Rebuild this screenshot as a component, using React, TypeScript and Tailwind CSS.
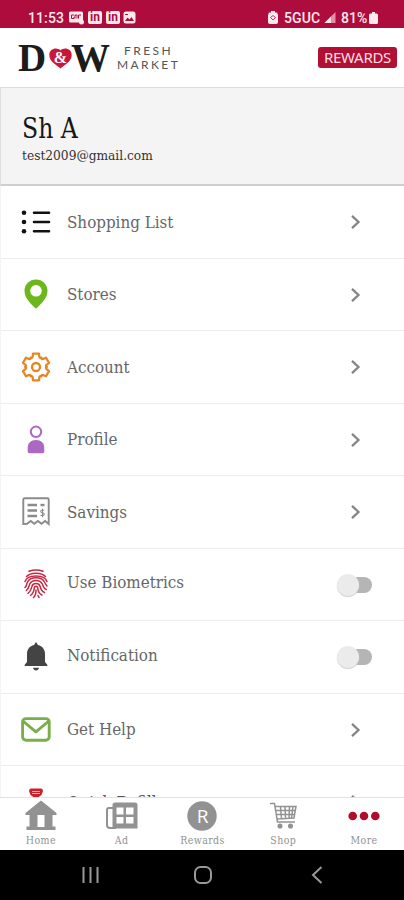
import React, { useState } from 'react';

interface MenuItem {
  label: string;
  icon: React.ReactNode;
  isToggle?: boolean;
}

const slab = "font-['DejaVu_Serif_Condensed','DejaVu_Serif',serif] [font-stretch:condensed] inline-block whitespace-nowrap";

const ListIcon = () => (
  <svg width="30" height="24" viewBox="0 0 30 24" fill="#111">
    <circle cx="3" cy="2.700" r="2.300" />
    <circle cx="3" cy="12" r="2.300" />
    <circle cx="3" cy="21.300" r="2.300" />
    <path d="M13 2.700h15M13 12h15M13 21.300h15" stroke="#111" strokeWidth="2.600" strokeLinecap="round" />
  </svg>
);

const PinIcon = () => (
  <svg width="24" height="30" viewBox="0 0 24 30">
    <path
      fillRule="evenodd"
      fill="#6cb81c"
      d="M12 0.5C5.4 0.5 0.5 5.4 0.5 11.8C0.5 19.5 7 25 12 29.8C17 25 23.5 19.5 23.5 11.8C23.5 5.4 18.6 0.5 12 0.5ZM12 6a5.8 5.8 0 1 1 0 11.6a5.8 5.8 0 0 1 0-11.6Z"
    />
  </svg>
);

const GearIcon = () => (
  <svg width="32" height="32" viewBox="-16 -16 32 32" fill="none" stroke="#e58624" strokeWidth="2.3" strokeLinecap="round" strokeLinejoin="round">
    {[0, 60, 120, 180, 240, 300].map((deg) => (
      <path key={deg} transform={`rotate(${deg})`} d="M-5.300 -9.200C-4.300 -8.800 -3.500 -9.300 -3.400 -10.200L-3 -13.300H3L3.400 -10.200C3.500 -9.300 4.300 -8.800 5.300 -9.200" />
    ))}
    <circle r="4" />
  </svg>
);

const PersonIcon = () => (
  <svg width="18" height="29" viewBox="0 0 18 29">
    <circle cx="9" cy="6.800" r="5.200" fill="none" stroke="#ad68c4" strokeWidth="2" />
    <path d="M0.7 26.5V23c0-4.8 3.2-8 8.3-8s8.3 3.2 8.3 8v3.5q0 1.8-1.8 1.8h-13Q0.7 28.3 0.7 26.5Z" fill="#ad68c4" />
  </svg>
);

const ReceiptIcon = () => (
  <svg width="28" height="29" viewBox="0 0 28 29" fill="none" stroke="#8b8b8b">
    <path d="M1.3 27V2.5q0-1.2 1.2-1.2h23q1.2 0 1.2 1.200V27l-3.600-3l-3.600 2.800l-3.600-2.800l-3.600 2.800l-3.600-2.800l-3.600 2.800Z" strokeWidth="1.900" />
    <path d="M5.500 8h9.500M5.500 13.500h9.500M5.500 19h9.500" strokeWidth="2.400" />
    <path d="M18.500 8h4" strokeWidth="2.400" />
    <path d="M22.300 13.300c-3-1-4 .500-3.400 1.700c.6 1 3 .8 3.300 2.100c.3 1.500-2 2-3.700 1.200M20.500 11.800v8.500" strokeWidth="1.100" />
  </svg>
);

const FingerprintIcon = () => (
  <svg width="24" height="30" viewBox="0 0 24 30" fill="none" stroke="#c42842" strokeWidth="1.5" strokeLinecap="round">
    <path d="M5 2.300Q12-.3 19 2.300" />
    <path d="M2.500 7.500C6.500 3 17.500 3 21.500 7.500" />
    <path d="M1 12.500C3.500 5 20.500 5 23 12.500" />
    <path d="M1 18.500C2.500 17 2.500 15.500 3.300 13.500C6 7 18 7 20.800 13.500Q22 16 23 17" />
    <path d="M2.300 21.500C5 19.500 4.800 17 5.800 14.800C8 10.300 16 10.300 18.200 14.800C19.200 17 19.500 19.500 22.300 20.500" />
    <path d="M4 24.300C7 22.300 7.300 19.500 8 17.300C9 13.600 15 13.600 16 17.300C16.700 20 17.500 22.300 20.500 23.500" />
    <path d="M6.500 26.500C9.500 24.500 10 21.500 10.300 19C10.700 16.800 13.300 16.800 13.700 19C14 22 15 24.800 18 26" />
    <path d="M9.500 28.500C11 27.200 12 25 12 21" />
    <path d="M14 26.500L15 28.500" />
  </svg>
);

const BellIcon = () => (
  <svg width="24" height="29" viewBox="0 0 24 29" fill="#444">
    <path d="M12 0L14 3C18.500 4 21 7.500 21 12v8l2.300 2.800V24H0.700v-1.200L3 20v-8c0-4.500 2.500-8 7-9Z" />
    <path d="M9 25.800h6c-.5 1.700-1.500 2.700-3 2.700s-2.500-1-3-2.700Z" />
  </svg>
);

const MailIcon = () => (
  <svg width="30" height="25" viewBox="0 0 30 25" fill="none" stroke="#7aae48" strokeWidth="2.900" strokeLinejoin="round">
    <rect x="1.600" y="1.600" width="26.600" height="21.600" rx="3.500" />
    <path d="M2.500 4.500l12.400 10.300l12.400-10.300" />
  </svg>
);

const menuItems: MenuItem[] = [
  { label: 'Shopping List', icon: <ListIcon /> },
  { label: 'Stores', icon: <PinIcon /> },
  { label: 'Account', icon: <GearIcon /> },
  { label: 'Profile', icon: <PersonIcon /> },
  { label: 'Savings', icon: <ReceiptIcon /> },
  { label: 'Use Biometrics', icon: <FingerprintIcon />, isToggle: true },
  { label: 'Notification', icon: <BellIcon />, isToggle: true },
  { label: 'Get Help', icon: <MailIcon /> },
];

const Chevron = () => (
  <svg width="12" height="16" viewBox="0 0 12 16" className="mr-[42px] mt-px" fill="none" stroke="#858585" strokeWidth="2.300">
    <path d="M2 1.800l6.500 6.200L2 14.200" />
  </svg>
);

const Toggle = ({ on, onClick }: { on: boolean; onClick: () => void }) => (
  <button onClick={onClick} className="relative mr-8 mt-px h-[22px] w-[35px]">
    <span className="absolute right-0 top-[3px] h-4 w-[30px] rounded-full bg-[#b5b5b5]" />
    <span className={`absolute top-0 size-[22px] rounded-full bg-[#ebebeb] shadow-[0_1px_1px_#d0d0d0] ${on ? 'right-0' : 'left-0'}`} />
  </button>
);

const StatusBar = () => (
  <div className="flex h-7 shrink-0 items-center bg-[#ad0c3c] pl-[28px] pr-[26px] pt-[7px] font-[Roboto,sans-serif] text-[14px] font-medium leading-none text-[#ffe9ef]">
    <span className="w-[41px] tracking-[0.1px]">11:53</span>
    <div className="flex gap-1">
      <svg width="15" height="14" viewBox="0 0 15 14">
        <rect y="0.500" width="14" height="11" rx="1.500" fill="#ffe9ef" />
        <path d="M5 4H2.500v3.500H5V6M6 7.500V4h2v3.500M9.500 7.500V4h2.500" fill="none" stroke="#ad0c3c" />
        <circle cx="12.500" cy="11" r="2.500" fill="#ffe9ef" />
      </svg>
      {[0, 1].map((n) => (
        <span key={n} className="flex h-[13px] w-[14px] items-center justify-center rounded-[2px] bg-[#ffe9ef] pb-px text-[12px] font-bold text-[#ad0c3c]">in</span>
      ))}
      <svg width="13" height="13" viewBox="0 0 13 13" className="-ml-px">
        <rect x="0.500" y="0.500" width="12" height="12" rx="2.500" fill="#ffe9ef" />
        <path d="M2 10l2.500-3.500l2 2L8.500 6l2.500 4Z" fill="#ad0c3c" />
        <path d="M2 3.500h3" stroke="#ad0c3c" />
      </svg>
    </div>
    <div className="ml-auto flex items-center">
      <svg width="10" height="13" viewBox="0 0 10 13" className="mr-[6px]">
        <path d="M3 0h4v1.500h2L10 4v7q0 2-2 2H2q-2 0-2-2V4l1-2.500h2Z" fill="#ffe9ef" />
        <path d="M2.500 6.500L5 4.500l2.500 2L5 9Z" fill="none" stroke="#ad0c3c" strokeWidth="0.800" />
      </svg>
      <span className="w-[40px] tracking-[0.1px]">5GUC</span>
      <svg width="12" height="11" viewBox="0 0 12 12" className="mr-[5px]">
        <path d="M0 12L12 0v12Z" fill="#e38fa6" />
        <path d="M0 12L7 5v7Z" fill="#ffe9ef" />
      </svg>
      <span className="w-[28px]">81%</span>
      <svg width="9" height="12" viewBox="0 0 9 12" fill="#ffe9ef">
        <path d="M3 0h3v1.500h1.500Q9 1.500 9 3v7.500Q9 12 7.500 12h-6Q0 12 0 10.500V3q0-1.500 1.500-1.500H3Z" />
      </svg>
    </div>
  </div>
);

const Header = () => (
  <header className="flex h-[59px] shrink-0 items-center justify-between bg-white pl-[18px] pr-[7px]">
    <div className="flex items-center">
      <div className="flex items-center font-['Liberation_Serif',serif] text-[39px] font-bold leading-[40px] text-[#1c1c1c]">
        <span className="w-[31px]">D</span>
        <svg width="23" height="21" viewBox="0 0 23 21" className="mt-px">
          <path d="M11.500 20.500C8 17 0.300 14 0.300 7C0.300 0 8.500-1 11.500 2.500C14.500-1 22.700 0 22.700 7C22.700 14 15 17 11.500 20.500Z" fill="#c8183a" />
          <text x="11.500" y="15" textAnchor="middle" fontSize="16" fill="#fff">&amp;</text>
        </svg>
        <span className="-ml-px">W</span>
      </div>
      <div className="ml-[7px] mt-px flex flex-col items-center font-[Lato,sans-serif] text-[12px] leading-[14px] text-[#555]">
        <span className="tracking-[2.500px]">FRESH</span>
        <span className="tracking-[2.400px]">MARKET</span>
      </div>
    </div>
    <span className="flex h-[21px] w-[79px] items-center justify-center rounded-[3px] bg-[#b20f34] font-['Noto_Sans',sans-serif] text-[15px] leading-none tracking-[-0.300px] text-[#ffdfe5]">
      REWARDS
    </span>
  </header>
);

const tabs = [
  {
    label: 'Home',
    icon: (
      <svg width="32" height="31" viewBox="0 0 32 31" fill="#929292">
        <path fillRule="evenodd" d="M16 0.500L31.500 13v2h-4v11.500h3V30H1.500v-3.500h3V15h-4v-2ZM12.500 15v12h7V15Z" />
      </svg>
    ),
  },
  {
    label: 'Ad',
    icon: (
      <svg width="32" height="27" viewBox="0 0 32 27">
        <path d="M7 6H3Q1 6 1 8v15q0 3 3 3h6" fill="none" stroke="#929292" strokeWidth="2" />
        <path fillRule="evenodd" d="M9 .5h20q2.500 0 2.500 2.500V26.500H8q-1.500 0-1.500-2V3Q6.500.5 9 .5ZM10.500 5.500v7h7v-7ZM20 5.500v7h7.500v-7ZM10.500 15v6.500h7V15ZM20 15v6.500h7.500V15Z" fill="#929292" />
      </svg>
    ),
  },
  {
    label: 'Rewards',
    icon: (
      <svg width="30" height="30" viewBox="0 0 30 30">
        <circle cx="15" cy="15" r="14.700" fill="#929292" />
        <text x="15.500" y="21.700" textAnchor="middle" fontSize="19" fill="#fff" className="font-['Open_Sans',sans-serif]">R</text>
      </svg>
    ),
  },
  {
    label: 'Shop',
    icon: (
      <svg width="27" height="27" viewBox="0 0 27 27" fill="none" stroke="#929292" strokeWidth="1.500">
        <path d="M0 1.500h4.500l3 18.500H25M5.500 4.500H26l-2 11.500L7 17M6 8.500h19M6.500 12.500h18M10.500 4.500l1 12M15 4.500l.5 12M19.500 4.500l-.5 12M23 4.500l-1.500 11.500" />
        <circle cx="10" cy="24" r="1.800" fill="#929292" />
        <circle cx="20.500" cy="24" r="1.800" fill="#929292" />
      </svg>
    ),
  },
  {
    label: 'More',
    icon: (
      <svg width="32" height="10" viewBox="0 0 32 10" fill="#b00d2c">
        <circle cx="4.700" cy="5" r="4.300" />
        <circle cx="16" cy="5" r="4.300" />
        <circle cx="27.300" cy="5" r="4.300" />
      </svg>
    ),
  },
];

const App: React.FC = () => {
  const [toggled, setToggled] = useState<Record<string, boolean>>({});

  const handleToggle = (label: string) => {
    setToggled((prev) => ({ ...prev, [label]: !prev[label] }));
  };

  return (
    <div className="flex h-[900px] w-[404px] flex-col overflow-hidden bg-white">
      <StatusBar />
      <Header />

      {/* signed-in user */}
      <div className="h-[99px] shrink-0 border-b-2 border-l border-t border-b-[#cfcfcf] border-l-[#dedede] border-t-[#dcdcdc] bg-[#f4f4f4] pl-[21px] pt-[25px]">
        <div className="h-[29px]">
          <span className={`${slab} origin-left scale-x-[0.97] text-[27px] leading-[32px] text-[#161616]`}>Sh A</span>
        </div>
        <div className="h-[20px]">
          <span className={`${slab} origin-left scale-x-[1.045] text-[13px] leading-[20px] text-[#333]`}>test2009@gmail.com</span>
        </div>
      </div>

      {/* menu */}
      <div className="min-h-0 flex-1 overflow-hidden border-l border-[#f4f4f4]">
        {menuItems.map((item) => (
          <div key={item.label} className="flex h-[72.500px] items-center border-b border-[#ececec] pl-[17px]">
            <div className="flex w-9 justify-center">{item.icon}</div>
            <div className={`ml-[13px] flex-1 ${item.isToggle ? 'pb-[4px]' : ''}`}>
              <span className={`${slab} origin-left scale-x-[0.99] text-[17px] leading-6 text-[#666]`}>{item.label}</span>
            </div>
            {item.isToggle ? (
              <Toggle on={!!toggled[item.label]} onClick={() => handleToggle(item.label)} />
            ) : (
              <Chevron />
            )}
          </div>
        ))}
        <div className="flex h-[72px] items-start pl-[17px] pt-[22px]">
          <div className="flex w-9 justify-center">
            <svg width="14" height="24" viewBox="0 0 14 24">
              <path d="M2 .5h10Q14 .5 14 3L12.500 7L9 9.500H5L1.500 7L0 3Q0 .5 2 .5Z" fill="#cb202b" />
              <path d="M3 3.500h8M3 5.500h8" stroke="#efb4b8" />
              <path d="M2 10h10v13H2Z" fill="#cb202b" />
            </svg>
          </div>
          <div className="ml-[13px] mt-[2px] flex-1">
            <span className={`${slab} origin-left scale-x-[0.99] text-[17px] leading-6 text-[#555]`}>Quick Refills</span>
          </div>
          <div className="mt-[5px]"><Chevron /></div>
        </div>
      </div>

      {/* bottom tabs */}
      <nav className="flex h-[53px] shrink-0 border-t border-[#e2e2e2] bg-white">
        {tabs.map((tab) => (
          <button key={tab.label} className="flex w-[80.800px] flex-col items-center pl-px">
            <div className="mt-[2px] flex h-[31px] items-center">{tab.icon}</div>
            <span className={`${slab} mt-[2px] text-[10.500px] leading-[15px] tracking-[0.400px] text-[#929292]`}>{tab.label}</span>
          </button>
        ))}
      </nav>

      {/* system navigation */}
      <div className="flex h-[50px] shrink-0 items-center bg-black pl-[81px] text-[#999]">
        <svg width="20" height="16" viewBox="0 0 20 16" stroke="currentColor" strokeWidth="2">
          <path d="M2.500 0v16M9.500 0v16M16.500 0v16" />
        </svg>
        <svg width="20" height="20" viewBox="0 0 20 20" className="ml-[92px]" fill="none" stroke="currentColor" strokeWidth="2">
          <rect x="2" y="2" width="16" height="16" rx="5.500" />
        </svg>
        <svg width="12" height="18" viewBox="0 0 12 18" className="ml-[98px]" fill="none" stroke="currentColor" strokeWidth="2">
          <path d="M10.500 1L2 9l8.500 8" />
        </svg>
      </div>
    </div>
  );
};

export default App;
